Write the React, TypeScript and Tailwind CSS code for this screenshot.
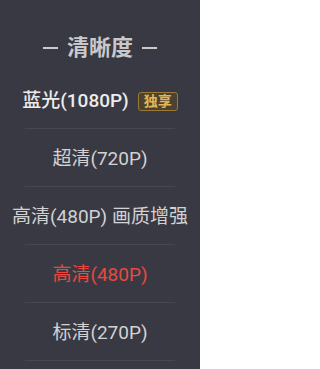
const font = { fontFamily: '"Roboto", "Noto Sans CJK SC", sans-serif' };

type Row = { label: string; tone?: "bright" | "active"; badge?: string };

const rows: Row[] = [
  { label: "蓝光(1080P)", tone: "bright", badge: "独享" },
  { label: "超清(720P)" },
  { label: "高清(480P) 画质增强" },
  { label: "高清(480P)", tone: "active" },
  { label: "标清(270P)" },
];

function QualityRow({ row }: { row: Row }) {
  return (
    <div className="flex flex-col">
      <div className="flex h-[57px] items-center justify-center pt-[4px]">
        <span
          className={
            row.tone === "active"
              ? "text-[19px] text-[#e8493f]"
              : row.tone === "bright"
                ? "text-[19px] font-medium text-[#ececec]"
                : "text-[19px] text-[#d2d2d4]"
          }
        >
          {row.label}
        </span>
        {row.badge && (
          <span className="ml-[9px] rounded-[3px] border border-[#9c7a36] bg-[#4b4232] px-[5px] text-[14px] leading-[17px] font-bold text-[#e4b650]">
            {row.badge}
          </span>
        )}
      </div>
      <div className="mx-[25px] h-px bg-[#474751]" />
    </div>
  );
}

export default function App() {
  return (
    <div className="h-[369px] w-[200px] overflow-hidden bg-[#393943]" style={font}>
      <div className="flex h-[71px] items-start justify-center pt-[34px]">
        <div className="flex items-center gap-[9px] text-[#c9c9cc]">
          <span className="h-[2px] w-[15px] bg-[#c9c9cc]" />
          <span className="text-[22px] leading-[28px] font-bold">清晰度</span>
          <span className="h-[2px] w-[15px] bg-[#c9c9cc]" />
        </div>
      </div>
      {rows.map((r) => (
        <QualityRow key={r.label + (r.tone ?? "")} row={r} />
      ))}
    </div>
  );
}
